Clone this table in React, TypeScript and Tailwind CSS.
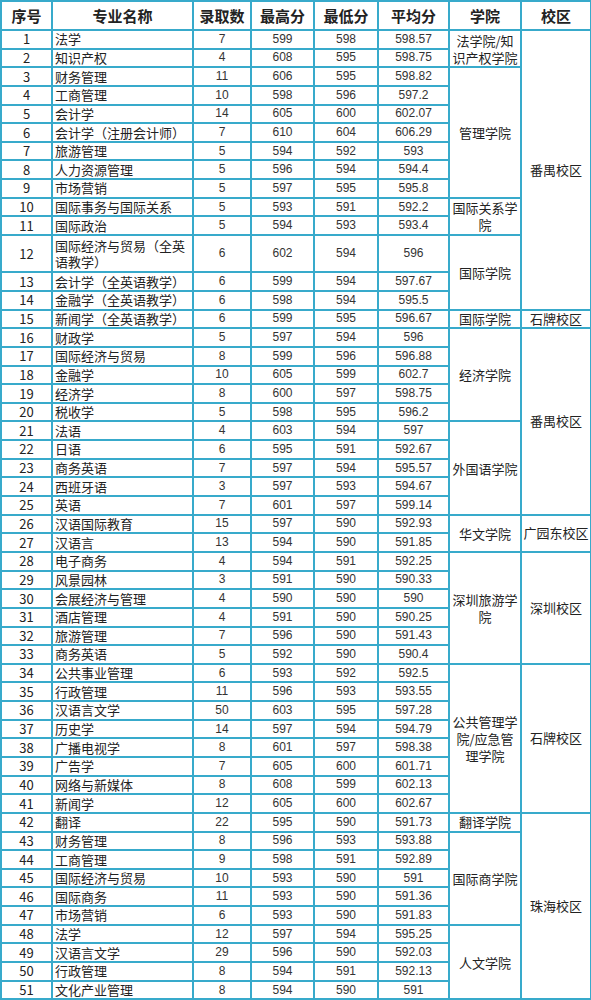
type Row = [string, string, string, string, string];

const rows: Row[] = [
  ["法学", "7", "599", "598", "598.57"],
  ["知识产权", "4", "608", "595", "598.75"],
  ["财务管理", "11", "606", "595", "598.82"],
  ["工商管理", "10", "598", "596", "597.2"],
  ["会计学", "14", "605", "600", "602.07"],
  ["会计学（注册会计师）", "7", "610", "604", "606.29"],
  ["旅游管理", "5", "594", "592", "593"],
  ["人力资源管理", "5", "596", "594", "594.4"],
  ["市场营销", "5", "597", "595", "595.8"],
  ["国际事务与国际关系", "5", "593", "591", "592.2"],
  ["国际政治", "5", "594", "593", "593.4"],
  ["国际经济与贸易（全英语教学）", "6", "602", "594", "596"],
  ["会计学（全英语教学）", "6", "599", "594", "597.67"],
  ["金融学（全英语教学）", "6", "598", "594", "595.5"],
  ["新闻学（全英语教学）", "6", "599", "595", "596.67"],
  ["财政学", "5", "597", "594", "596"],
  ["国际经济与贸易", "8", "599", "596", "596.88"],
  ["金融学", "10", "605", "599", "602.7"],
  ["经济学", "8", "600", "597", "598.75"],
  ["税收学", "5", "598", "595", "596.2"],
  ["法语", "4", "603", "594", "597"],
  ["日语", "6", "595", "591", "592.67"],
  ["商务英语", "7", "597", "594", "595.57"],
  ["西班牙语", "3", "597", "593", "594.67"],
  ["英语", "7", "601", "597", "599.14"],
  ["汉语国际教育", "15", "597", "590", "592.93"],
  ["汉语言", "13", "594", "590", "591.85"],
  ["电子商务", "4", "594", "591", "592.25"],
  ["风景园林", "3", "591", "590", "590.33"],
  ["会展经济与管理", "4", "590", "590", "590"],
  ["酒店管理", "4", "591", "590", "590.25"],
  ["旅游管理", "7", "596", "590", "591.43"],
  ["商务英语", "5", "592", "590", "590.4"],
  ["公共事业管理", "6", "593", "592", "592.5"],
  ["行政管理", "11", "596", "593", "593.55"],
  ["汉语言文学", "50", "603", "595", "597.28"],
  ["历史学", "14", "597", "594", "594.79"],
  ["广播电视学", "8", "601", "597", "598.38"],
  ["广告学", "7", "605", "600", "601.71"],
  ["网络与新媒体", "8", "608", "599", "602.13"],
  ["新闻学", "12", "605", "600", "602.67"],
  ["翻译", "22", "595", "590", "591.73"],
  ["财务管理", "8", "596", "593", "593.88"],
  ["工商管理", "9", "598", "591", "592.89"],
  ["国际经济与贸易", "10", "593", "590", "591"],
  ["国际商务", "11", "593", "590", "591.36"],
  ["市场营销", "6", "593", "590", "591.83"],
  ["法学", "12", "597", "594", "595.25"],
  ["汉语言文学", "29", "596", "590", "592.03"],
  ["行政管理", "8", "594", "591", "592.13"],
  ["文化产业管理", "8", "594", "590", "591"],
];

// start row (1-based) -> [label, span]
const colleges: Record<number, [string, number]> = {
  1: ["法学院/知识产权学院", 2],
  3: ["管理学院", 7],
  10: ["国际关系学院", 2],
  12: ["国际学院", 3],
  15: ["国际学院", 1],
  16: ["经济学院", 5],
  21: ["外国语学院", 5],
  26: ["华文学院", 2],
  28: ["深圳旅游学院", 6],
  34: ["公共管理学院/应急管理学院", 8],
  42: ["翻译学院", 1],
  43: ["国际商学院", 5],
  48: ["人文学院", 4],
};

const campuses: Record<number, [string, number]> = {
  1: ["番禺校区", 14],
  15: ["石牌校区", 1],
  16: ["番禺校区", 10],
  26: ["广园东校区", 2],
  28: ["深圳校区", 6],
  34: ["石牌校区", 8],
  42: ["珠海校区", 10],
};

const cell = "border-2 border-[#38aacb] p-0";
const num = `${cell} text-center text-[12px] leading-[13px] text-[#333] font-['Liberation_Sans',sans-serif]`;
const headers = ["序号", "专业名称", "录取数", "最高分", "最低分", "平均分", "学院", "校区"];

export default function App() {
  return (
    <div className="w-[591px] bg-white font-['Noto_Sans_CJK_SC',sans-serif] text-[#222]">
      <table className="w-[590px] table-fixed border-collapse">
        <colgroup>
          <col className="w-[51px]" />
          <col className="w-[141px]" />
          <col className="w-[58px]" />
          <col className="w-[63px]" />
          <col className="w-[64px]" />
          <col className="w-[71px]" />
          <col className="w-[72px]" />
          <col className="w-[70px]" />
        </colgroup>
        <thead>
          <tr className="h-[29px]">
            {headers.map((h) => (
              <th key={h} className={`${cell} text-center text-[15px] font-bold leading-none`}>
                {h}
              </th>
            ))}
          </tr>
        </thead>
        <tbody>
          {rows.map((r, i) => {
            const n = i + 1;
            const col = colleges[n];
            const cam = campuses[n];
            return (
              <tr key={n} className={n === 12 ? "h-[37.3px]" : "h-[18.65px]"}>
                <td className={`${cell} text-center text-[13px] leading-[14px]`}>{n}</td>
                <td className={`${cell} px-[2px] text-[13px] ${n === 12 ? "leading-[16px]" : "leading-[14px]"}`}>
                  {r[0]}
                </td>
                <td className={num}>{r[1]}</td>
                <td className={num}>{r[2]}</td>
                <td className={num}>{r[3]}</td>
                <td className={num}>{r[4]}</td>
                {col && (
                  <td rowSpan={col[1]} className={`${cell} px-[2px] text-center text-[13px] ${col[1] > 1 ? "leading-[17px]" : "leading-[14px]"}`}>
                    {col[0]}
                  </td>
                )}
                {cam && (
                  <td rowSpan={cam[1]} className={`${cell} text-center text-[13px] leading-[14px]`}>
                    {cam[0]}
                  </td>
                )}
              </tr>
            );
          })}
        </tbody>
      </table>
    </div>
  );
}
